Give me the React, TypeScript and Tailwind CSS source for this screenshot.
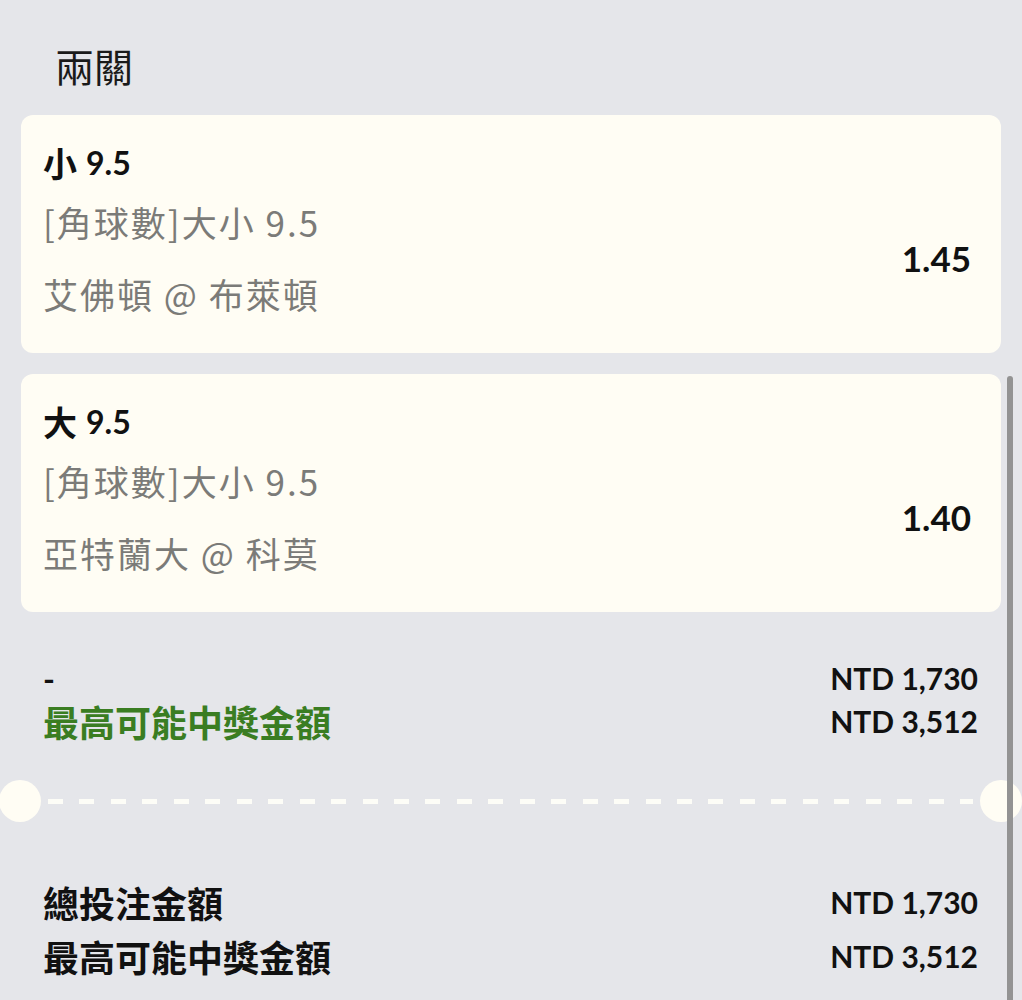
const latin = "font-['Lato','Noto_Sans_CJK_TC',sans-serif]";

const legs = [
  { pick: "小", line: "9.5", market: "[角球數]大小 9.5", match: "艾佛頓 @ 布萊頓", odds: "1.45" },
  { pick: "大", line: "9.5", market: "[角球數]大小 9.5", match: "亞特蘭大 @ 科莫", odds: "1.40" },
];

function LegCard({ leg }: { leg: (typeof legs)[number] }) {
  return (
    <div className="rounded-[12px] bg-[#fffdf4] pl-[22px] pr-[30px] pt-6 pb-[23px]">
      <div className="flex items-center leading-[48px] text-[#111]">
        <span className="font-['Noto_Sans_CJK_TC',sans-serif] text-[34px] font-bold">{leg.pick}</span>
        <span className={`${latin} ml-[9px] text-[32px] font-bold`}>{leg.line}</span>
      </div>
      <div className="mt-[-1px] flex items-center">
        <div className="flex-1 font-['Noto_Sans_CJK_TC',sans-serif] text-[35px] leading-[72px] tracking-[2px] text-[#7b7b78]">
          <div>{leg.market}</div>
          <div>{leg.match}</div>
        </div>
        <div className={`${latin} text-[35px] font-bold text-[#111]`}>{leg.odds}</div>
      </div>
    </div>
  );
}

function Row({ label, value, labelClass }: { label: string; value: string; labelClass: string }) {
  return (
    <div className="flex items-center justify-between">
      <span className={`font-bold ${labelClass}`}>{label}</span>
      <span className={`${latin} text-[30px] font-bold text-[#111]`}>{value}</span>
    </div>
  );
}

export default function App() {
  return (
    <div className="relative min-h-[1000px] w-full overflow-hidden bg-[#e5e6ea]">
      <div className="px-[55px] pt-[41px] leading-[48px]">
        <h1 className="font-['Noto_Sans_CJK_TC',sans-serif] text-[39px] font-normal text-[#1a1a1a]">
          兩關
        </h1>
      </div>

      <div className="mt-[26px] flex flex-col gap-[21px] px-[21px]">
        {legs.map((leg) => (
          <LegCard key={leg.match} leg={leg} />
        ))}
      </div>

      <div className="mt-[45px] flex flex-col pl-[43px] pr-[44px] leading-[43px]">
        <Row label="-" value="NTD 1,730" labelClass={`${latin} text-[32px] text-[#111]`} />
        <Row
          label="最高可能中獎金額"
          value="NTD 3,512"
          labelClass="font-['Noto_Sans_CJK_TC',sans-serif] text-[36px] text-[#3a7d22]"
        />
      </div>

      <div className="mt-[37px] flex h-[42px] items-center">
        <div className="ml-[-1px] h-[42px] w-[42px] shrink-0 rounded-full bg-[#fffdf4]" />
        <div className="mx-[7px] h-[5px] flex-1 bg-[repeating-linear-gradient(90deg,#fdfdf7_0_15px,transparent_15px_31.45px)]" />
        <div className="h-[42px] w-[42px] shrink-0 rounded-full bg-[#fffdf4]" />
      </div>

      <div className="mt-[53px] flex flex-col pl-[43px] pr-[44px] leading-[54px]">
        <Row
          label="總投注金額"
          value="NTD 1,730"
          labelClass="font-['Noto_Sans_CJK_TC',sans-serif] text-[36px] text-[#111]"
        />
        <Row
          label="最高可能中獎金額"
          value="NTD 3,512"
          labelClass="font-['Noto_Sans_CJK_TC',sans-serif] text-[36px] text-[#111]"
        />
      </div>

      <div className="absolute right-[9px] top-[376px] bottom-0 w-[6px] rounded-t-full bg-[#939393]" />
    </div>
  );
}
